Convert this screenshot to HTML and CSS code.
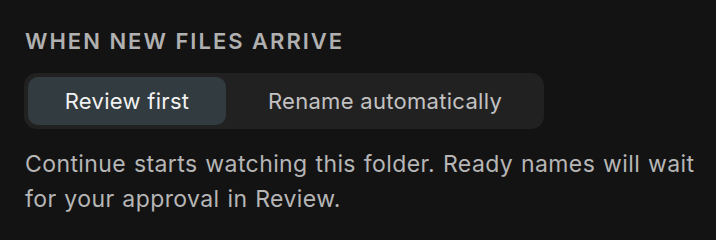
FILE: index.html
```html
<!DOCTYPE html>
<html>
<head>
<meta charset="utf-8">
<link rel="stylesheet" href="styles.css">
</head>
<body>
<section class="panel">
  <h2 class="label">WHEN NEW FILES ARRIVE</h2>
  <div class="segmented">
    <button class="seg seg-active">Review first</button>
    <button class="seg seg-other">Rename automatically</button>
  </div>
  <p class="note">Continue starts watching this folder. Ready names will wait for your approval in Review.</p>
</section>
</body>
</html>
```
FILE: styles.css
```css
html, body {
  margin: 0;
  padding: 0;
  background: #141314;
}
body {
  width: 716px;
  height: 240px;
  overflow: hidden;
  font-family: Inter, "Noto Sans", sans-serif;
}
.panel {
  padding: 28px 24px 0 24px;
  display: flex;
  flex-direction: column;
  align-items: flex-start;
}
.label {
  margin: 0 0 0 1px;
  font-size: 22px;
  font-weight: 600;
  letter-spacing: 2px;
  color: #b0b0b0;
  line-height: 26px;
}
.segmented {
  margin-top: 19px;
  display: flex;
  padding: 4px;
  background: #222122;
  border-radius: 13px;
}
.seg {
  height: 48px;
  border: none;
  background: transparent;
  font-family: inherit;
  font-size: 22px;
  color: #c2c2c2;
  border-radius: 10px;
  letter-spacing: 0.3px;
  padding: 0;
}
.seg-active {
  width: 198px;
  background: #323b3f;
  color: #f2f2f2;
}
.seg-other {
  width: 314px;
  padding-left: 4px;
}
.note {
  margin: 18px 0 0 1px;
  font-size: 23px;
  line-height: 35px;
  color: #b6b6b6;
  letter-spacing: 0.4px;
  word-spacing: 1px;
  width: 684px;
}
```
